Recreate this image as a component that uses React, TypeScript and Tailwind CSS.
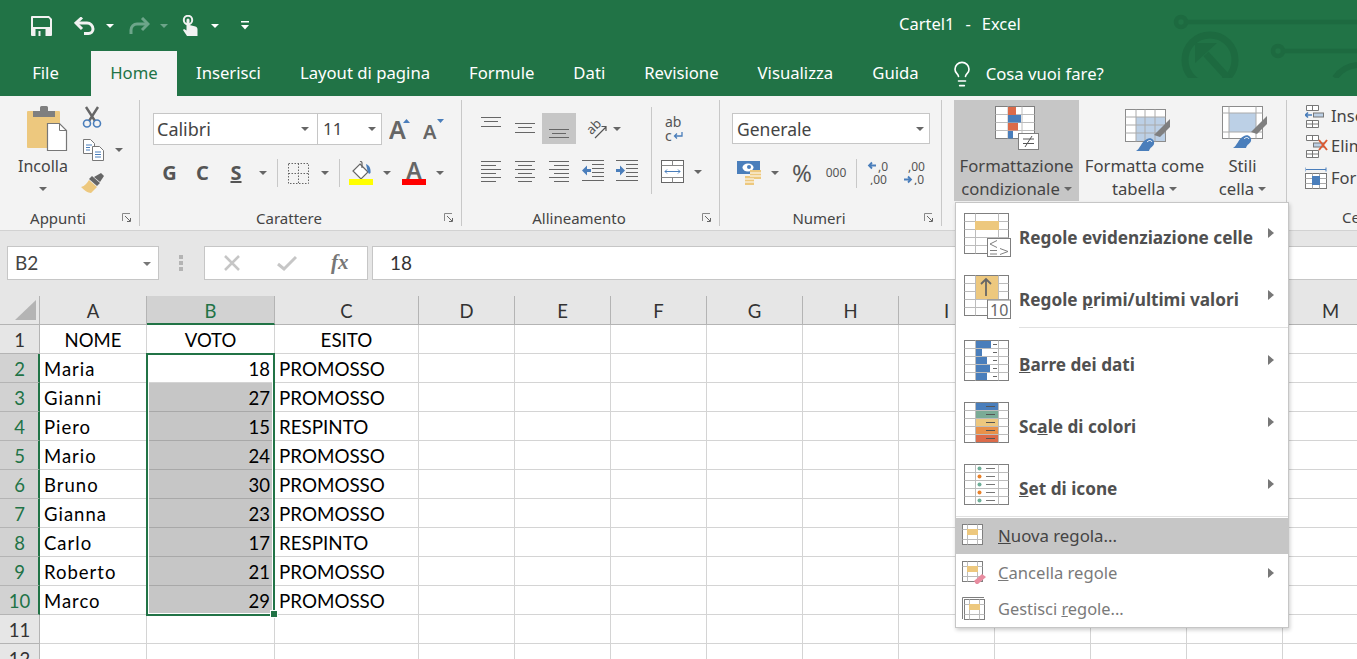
import { Lightbulb } from "lucide-react";
import type { ReactNode } from "react";

const cols = ["D", "E", "F", "G", "H", "I", "J", "K", "L", "M"];

const rows = [
  ["NOME", "VOTO", "ESITO"],
  ["Maria", "18", "PROMOSSO"],
  ["Gianni", "27", "PROMOSSO"],
  ["Piero", "15", "RESPINTO"],
  ["Mario", "24", "PROMOSSO"],
  ["Bruno", "30", "PROMOSSO"],
  ["Gianna", "23", "PROMOSSO"],
  ["Carlo", "17", "RESPINTO"],
  ["Roberto", "21", "PROMOSSO"],
  ["Marco", "29", "PROMOSSO"],
  ["", "", ""],
  ["", "", ""],
];

const uiFont = "font-['Noto_Sans','Open_Sans',sans-serif]";
const cellFont = "font-['Lato','Carlito',sans-serif]";

// small dropdown triangle
const Tri = ({ className = "", fill = "#666" }: { className?: string; fill?: string }) => (
  <svg width="8" height="4" viewBox="0 0 8 4" className={"shrink-0 " + className}>
    <polygon points="0,0 8,0 4,4" fill={fill} />
  </svg>
);

const Sep = ({ className = "" }: { className?: string }) => (
  <div className={"w-px shrink-0 bg-[#c8c8c8] " + className} />
);

const Launcher = () => (
  <svg width="10" height="10" viewBox="0 0 10 10" className="shrink-0">
    <path d="M.5 8V.5H8" fill="none" stroke="#888" />
    <path d="M3 3l5 5M5 8.5h3.5V5" fill="none" stroke="#666" />
  </svg>
);

const Group = ({
  label,
  width,
  children,
}: {
  label: string;
  width: string;
  children: ReactNode;
}) => (
  <div className={"mt-[4px] flex h-[126px] shrink-0 flex-col border-r border-[#c8c8c8] " + width}>
    <div className="h-[106px]">{children}</div>
    <div className="flex h-[20px] items-center pr-[7px] pt-[4px]">
      <span className="mr-[6px] flex-1 text-center text-[15px] leading-[20px] text-[#444]">{label}</span>
      <Launcher />
    </div>
  </div>
);

const SaveIcon = () => (
  <svg width="21" height="20" viewBox="0 0 21 20" className="shrink-0">
    <path d="M1 0h17l3 3v16a1 1 0 0 1-1 1H1a1 1 0 0 1-1-1V1a1 1 0 0 1 1-1z" fill="#f2f2f2" />
    <path d="M2 2h15.500L19 3.500V11H2z" fill="#217346" />
    <rect x="4.500" y="13" width="10" height="7" fill="#217346" />
    <rect x="7.500" y="15" width="2" height="5" fill="#f2f2f2" />
  </svg>
);

const UndoIcon = ({ stroke }: { stroke: string }) => (
  <svg width="22" height="18" viewBox="0 0 22 18" className="shrink-0">
    <path d="M2 6h11a6 6 0 0 1 6 6 4.500 4.500 0 0 1-4.500 4.500H10" fill="none" stroke={stroke} strokeWidth="3" />
    <path d="M8 .5L2 6l6 6" fill="none" stroke={stroke} strokeWidth="3" />
  </svg>
);

const RedoIcon = ({ stroke }: { stroke: string }) => (
  <svg width="21" height="18" viewBox="0 0 21 18" className="shrink-0">
    <path d="M19 7H8a6 6 0 0 0-6 6v4" fill="none" stroke={stroke} strokeWidth="3" />
    <path d="M13 1l6 6-6 6" fill="none" stroke={stroke} strokeWidth="3" />
  </svg>
);

const TouchIcon = () => (
  <svg width="16" height="21" viewBox="0 0 16 21" className="shrink-0">
    <circle cx="6" cy="5" r="4.200" fill="none" stroke="#f2f2f2" strokeWidth="2" />
    <path d="M4.500 5a1.500 1.500 0 0 1 3 0v5l6 1.500c1.500.5 2 1.500 2 3V21H5l-4-6 1-1 2.500 1.500z" fill="#f2f2f2" />
  </svg>
);

const CustomizeIcon = () => (
  <svg width="8" height="9" viewBox="0 0 8 9" className="shrink-0">
    <rect width="8" height="1.500" fill="#fff" />
    <polygon points="0,4 8,4 4,8.500" fill="#fff" />
  </svg>
);

const Circuit = () => (
  <svg
    width="187"
    height="78"
    viewBox="0 0 187 78"
    className="pointer-events-none absolute right-0 top-0"
  >
    <g fill="none" stroke="#1d6a40" strokeWidth="4.500">
      <circle cx="11" cy="22" r="5" />
      <path d="M16 22h171" />
      <circle cx="108" cy="51" r="5" />
      <path d="M113 51h74" />
      <circle cx="40" cy="60" r="25" strokeWidth="7" />
      <path d="M165 78a30 30 0 0 1 22-13" strokeWidth="6" />
      <path d="M36 54L58 78" strokeWidth="7" />
    </g>
    <polygon points="25,43 47,43 25,63" fill="#1d6a40" />
  </svg>
);

const PasteIcon = () => (
  <svg width="41" height="45" viewBox="0 0 41 45" className="ml-[27px] shrink-0">
    <rect x="0" y="5" width="33" height="37" rx="1" fill="#edc87e" />
    <path d="M6 5h7V1.500Q13 0 14.500 0h5Q21 0 21 1.500V5h7v6H6z" fill="#7f7f7f" />
    <path d="M20.500 17.500h12l7 7v20h-19z" fill="#fff" stroke="#777" strokeWidth="1.200" />
    <path d="M32.500 17.500v7h7" fill="none" stroke="#777" />
  </svg>
);

const ScissorsIcon = () => (
  <svg width="20" height="22" viewBox="0 0 20 22" className="ml-[2px] mt-[6px] shrink-0">
    <path d="M4 1l9 14M16 1L7 15" stroke="#666" strokeWidth="2.400" fill="none" />
    <circle cx="5" cy="17.500" r="3.500" fill="none" stroke="#4a7ebb" strokeWidth="1.600" />
    <circle cx="15" cy="17.500" r="3.500" fill="none" stroke="#4a7ebb" strokeWidth="1.600" />
  </svg>
);

const CopyIcon = () => (
  <svg width="21" height="22" viewBox="0 0 21 22" className="shrink-0">
    <path d="M.500.500h7l4 4v10h-11z" fill="#fff" stroke="#777" />
    <path d="M9.500 7.500h7l4 4v10h-11z" fill="#fff" stroke="#777" />
    <path d="M3 6h6M3 8.500h4M3 11h4M12 13h6M12 15.500h6M12 18h6" stroke="#4a7ebb" />
  </svg>
);

const BrushIcon = () => (
  <svg width="24" height="21" viewBox="0 0 24 21" className="ml-[1px] mt-[12px] shrink-0">
    <path d="M0 14c4-1 6-4 8-7l8 7-6 6c-3 0-7-3-10-6z" fill="#edc87e" />
    <path d="M8 6l3-3 8 7-3 3z" fill="#666" />
    <path d="M13 4l7-4 3 3-4 6z" fill="#666" />
  </svg>
);

const GrowIcon = ({ up }: { up: boolean }) => (
  <svg width="21" height="21" viewBox="0 0 21 21" className="shrink-0">
    <text
      x="0"
      y="20"
      fontSize={up ? "25" : "20"}
      fontWeight="600"
      fontFamily="Noto Sans, sans-serif"
      fill="#666"
    >
      A
    </text>
    {up ? (
      <polygon points="14,4 21,4 17.500,0" fill="#4a7ebb" />
    ) : (
      <polygon points="14,0 21,0 17.500,4" fill="#4a7ebb" />
    )}
  </svg>
);

const BordersIcon = () => (
  <svg width="21" height="21" viewBox="0 0 21 21" className="ml-[10px] shrink-0">
    <path
      d="M.5.500h20v20H.5zM10.500.500v20M.5 10.500h20"
      fill="none"
      stroke="#666"
      strokeDasharray="1.500 1.500"
    />
  </svg>
);

const FillIcon = () => (
  <svg width="24" height="24" viewBox="0 0 24 24" className="ml-[9px] shrink-0">
    <path d="M11 3l8 8-7 7-8-8z" fill="#fff" stroke="#666" strokeWidth="1.200" />
    <path d="M11 0.500a1.500 1.500 0 0 1 2 1.500v5" fill="none" stroke="#666" strokeWidth="1.200" />
    <path d="M17 3c3 1 5 4 4.500 9l-1.500 1-1.500-3z" fill="#4a7ebb" />
    <rect x="0" y="18" width="24" height="6" fill="#ffff00" />
  </svg>
);

const FontColorIcon = () => (
  <div className="ml-[11px] flex h-[24px] w-[24px] shrink-0 flex-col items-center">
    <span className="h-[18px] text-[23px] font-semibold leading-[19px] text-[#666]">A</span>
    <div className="h-[6px] w-[24px] bg-[#ff0000]" />
  </div>
);

// grey bars used by the three vertical alignment buttons
const VLines = ({ lines, className = "" }: { lines: [number, number, number][]; className?: string }) => (
  <svg width="22" height="31" viewBox="0 0 22 31" className={"shrink-0 " + className}>
    {lines.map(([y, x, w], i) => (
      <rect key={i} x={x} y={y} width={w} height="1" fill="#666" />
    ))}
  </svg>
);

// six bars used by the horizontal alignment buttons
const HLines = ({ lines, className = "" }: { lines: [number, number, number][]; className?: string }) => (
  <svg width="22" height="22" viewBox="0 0 22 22" className={"shrink-0 " + className}>
    {lines.map(([y, x, w], i) => (
      <rect key={i} x={x} y={y} width={w} height="1" fill="#666" />
    ))}
  </svg>
);

const IndentIcon = ({ flip }: { flip: boolean }) => (
  <svg width="22" height="22" viewBox="0 0 22 22" className="ml-[12px] shrink-0">
    <path d="M0 .5h22M0 20.500h22M10 4.500h12M10 8.500h12M10 12.500h12M10 16.500h12" stroke="#666" />
    {flip ? (
      <path d="M0 9h4V5.500l5 5-5 5V12H0z" fill="#4a7ebb" />
    ) : (
      <path d="M9 9H5V5.500l-5 5 5 5V12h4z" fill="#4a7ebb" />
    )}
  </svg>
);

const OrientIcon = () => (
  <svg width="21" height="20" viewBox="0 0 21 20" className="shrink-0">
    <text
      x="8"
      y="12"
      fontSize="13"
      textAnchor="middle"
      fontFamily="Noto Sans, sans-serif"
      fill="#555"
      transform="rotate(-45 8 8)"
    >
      ab
    </text>
    <path d="M9 19L20 8M15.500 7.500H20V12" fill="none" stroke="#555" strokeWidth="1.200" />
  </svg>
);

const MergeIcon = () => (
  <svg width="23" height="23" viewBox="0 0 23 23" className="shrink-0">
    <rect x=".5" y=".5" width="22" height="22" fill="#fff" stroke="#666" />
    <path d="M.5 5.500h22M.5 17.500h22M11.500.500v5M11.500 17.500v5" stroke="#888" fill="none" />
    <path d="M4 11.500h15M6 9.500l-2 2 2 2M17 9.500l2 2-2 2" stroke="#4a7ebb" fill="none" />
  </svg>
);

const CurrencyIcon = () => (
  <svg width="24" height="24" viewBox="0 0 24 24" className="ml-[17px] shrink-0">
    <rect x="0" y="0" width="23" height="13" fill="#4a7ebb" />
    <ellipse cx="11" cy="6.500" rx="5.500" ry="4" fill="#fff" />
    <circle cx="12" cy="6" r="2" fill="#4a7ebb" />
    <rect x="13" y="9" width="11" height="9" fill="#edc87e" />
    <rect x="8" y="15" width="9" height="9" fill="#edc87e" />
    <path d="M13 12h11M13 15h11M8 18h9M8 21h9" stroke="#fff" />
  </svg>
);

const DecimalIcon = ({ top, bottom, arrowTop }: { top: string; bottom: string; arrowTop: boolean }) => (
  <svg width="23" height="24" viewBox="0 0 23 24" className="shrink-0">
    <text x={arrowTop ? "11" : "5"} y="10" fontSize="12" fontFamily="Noto Sans, sans-serif" fill="#555">
      {top}
    </text>
    <text x={arrowTop ? "3" : "11"} y="23" fontSize="12" fontFamily="Noto Sans, sans-serif" fill="#555">
      {bottom}
    </text>
    {arrowTop ? (
      <path d="M9 4.500H2M5 1.500l-3 3 3 3" fill="none" stroke="#4a7ebb" strokeWidth="1.800" />
    ) : (
      <path d="M1 18.500h7M5 15.500l3 3-3 3" fill="none" stroke="#4a7ebb" strokeWidth="1.800" />
    )}
  </svg>
);

const CondFormatIcon = () => (
  <svg width="44" height="44" viewBox="0 0 44 44" className="shrink-0">
    <rect x=".5" y=".5" width="39" height="32" fill="#fff" stroke="#7f7f7f" />
    <path d="M.5 8.500h39M.5 16.500h39M.5 24.500h39M13 .500v32M27 .500v32" stroke="#bcbcbc" />
    <rect x="13" y="1" width="8" height="8" fill="#dc6b4a" />
    <rect x="13" y="9" width="13" height="7.500" fill="#4a7ebb" />
    <rect x="13" y="17" width="10" height="7.500" fill="#dc6b4a" />
    <rect x="13" y="25" width="5" height="7.500" fill="#4a7ebb" />
    <rect x="23.500" y="27.500" width="20" height="16" fill="#fff" stroke="#7f7f7f" />
    <path d="M28 33h11M28 37.500h11M30 41l7-11" stroke="#555" />
  </svg>
);

const TableBrushIcon = ({ plain }: { plain: boolean }) => (
  <svg width="45" height="42" viewBox="0 0 45 42" className="shrink-0">
    <rect x=".5" y=".5" width="40" height="32" fill="#fff" stroke="#8c8c8c" />
    <rect x={plain ? 7 : 11} y={plain ? 7 : 8} width={plain ? 27 : 29} height={plain ? 19 : 24} fill="#bcd0e6" />
    {plain ? (
      <path d="M.5 7h40M.5 26h40M7 .500v32M34 .500v32" stroke="#aaa" fill="none" />
    ) : (
      <path d="M.5 8h40M.5 16h40M.5 24h40M11 .500v32M20 .500v32M30 .500v32" stroke="#aaa" fill="none" />
    )}
    <path d="M29 26l16-16v8L35 28z" fill="#7f7f7f" />
    <path d="M11 42c4-2 5-9 11-12 4-2 8 1 7 5-1 3-4 3-5 7z" fill="#4a7ebb" />
    <path d="M22 33c2-2 4-2 5 0" stroke="#fff" fill="none" />
  </svg>
);

const CellsIcon = ({ kind }: { kind: "ins" | "del" | "fmt" }) => (
  <svg width="23" height="23" viewBox="0 0 23 23" className="ml-[18px] shrink-0">
    {kind === "fmt" ? (
      <>
        <path d="M0 .5v4M21 .5v4M1 2.500h20" stroke="#4a7ebb" fill="none" />
        <rect x=".5" y="6.500" width="21" height="15" fill="#fff" stroke="#777" />
        <path d="M7.500 6.500v15M14.500 6.500v15M.5 11.500h21M.5 16.500h21" stroke="#aaa" />
        <rect x="7" y="9" width="8" height="9" fill="#4a7ebb" />
      </>
    ) : (
      <>
        <path d="M1.500.5h12v5h-12zM7.500.5v5M1.500 15.500h12v7h-12zM7.500 15.500v7M1.500 19h12" fill="#fff" stroke="#777" />
        <rect x="8.500" y="8" width="10" height="4" fill="#bcd0e6" stroke="#777" />
        {kind === "ins" ? (
          <path d="M7 10H0M3 7.500L.5 10 3 12.500" fill="none" stroke="#4a7ebb" strokeWidth="1.600" />
        ) : (
          <path d="M14 5l8 10M22 5l-8 10" stroke="#dc5a33" strokeWidth="2" />
        )}
      </>
    )}
  </svg>
);

const GridBase = ({ children }: { children: ReactNode }) => (
  <svg width="47" height="44" viewBox="0 0 47 44" className="shrink-0">
    <rect x=".5" y=".5" width="44" height="40" fill="#fff" stroke="#7f7f7f" />
    <path d="M.5 8.500h44M.5 16.500h44M.5 24.500h44M.5 32.500h44M11.500.500v40M34.500.500v40" stroke="#bcbcbc" />
    {children}
  </svg>
);

const menuBars = [15, 6, 11, 14, 11];
const scaleColors = ["#4a7ebb", "#7aab96", "#edc87e", "#e8914a", "#dc6b4a"];

const MenuIconHighlight = () => (
  <GridBase>
    <rect x="11" y="8" width="24" height="9" fill="#edc87e" />
    <rect x="23.500" y="25.500" width="23" height="18" fill="#fff" stroke="#7f7f7f" />
    <path d="M33 27.500l-7 3.500 7 3.500M26 37.500h7M26 41h7M36 35.500l8 3-8 3" fill="none" stroke="#7f7f7f" />
  </GridBase>
);

const MenuIconTop = () => (
  <GridBase>
    <rect x="12" y="1" width="22" height="23" fill="#edc87e" />
    <path d="M22 21V4M17 9l5-5 5 5" fill="none" stroke="#666" strokeWidth="1.800" />
    <rect x="23.500" y="25" width="23" height="18.500" fill="#fff" stroke="#7f7f7f" />
    <text x="26" y="41" fontSize="16" fontFamily="Noto Sans, sans-serif" fill="#666">
      10
    </text>
  </GridBase>
);

const MenuIconBars = () => (
  <GridBase>
    <rect x="12" y="1" width="22" height="39" fill="#fff" />
    <path d="M12 8.500h22M12 16.500h22M12 24.500h22M12 32.500h22" stroke="#bcbcbc" />
    {menuBars.map((w, i) => (
      <rect key={i} x="12" y={1 + i * 8} width={w} height="7" fill="#4a7ebb" />
    ))}
    {menuBars.map((_, i) => (
      <rect key={i} x="29" y={4 + i * 8} width="4" height="1" fill="#666" />
    ))}
  </GridBase>
);

const MenuIconScale = () => (
  <GridBase>
    {scaleColors.map((c, i) => (
      <rect key={i} x="12" y={1 + i * 8} width="22" height="7" fill={c} />
    ))}
    {scaleColors.map((_, i) => (
      <rect key={i} x="22" y={4 + i * 8} width="9" height="1" fill="#555" />
    ))}
  </GridBase>
);

const MenuIconSet = () => (
  <GridBase>
    {scaleColors.map((_, i) => (
      <g key={i}>
        <circle cx="15.500" cy={4.500 + i * 8} r="2" fill={i % 2 ? "#e8812a" : "#6fae98"} />
        <rect x="22" y={4 + i * 8} width="9" height="1" fill="#777" />
      </g>
    ))}
  </GridBase>
);

const SmallRule = ({ kind }: { kind: "new" | "del" | "manage" }) => (
  <svg width="24" height="24" viewBox="0 0 24 24" className="shrink-0">
    {kind === "manage" && <path d="M.5 22V.5H22" fill="none" stroke="#7f7f7f" />}
    <rect
      x={kind === "manage" ? 2.5 : 0.5}
      y={kind === "manage" ? 2.5 : 0.5}
      width="20"
      height="20"
      fill="#fff"
      stroke="#7f7f7f"
    />
    <path
      d={
        kind === "manage"
          ? "M2.500 7.500h20M2.500 17.500h20M7.500 2.500v20M17.500 2.500v20"
          : "M.5 5.500h20M.5 15.500h20M5.500.5v20M15.500.5v20"
      }
      stroke="#bcbcbc"
    />
    <rect x={kind === "manage" ? 7 : 5} y={kind === "manage" ? 7 : 5} width="11" height="6" fill="#edc87e" />
    {kind === "del" && <path d="M12 20l8-7 4 3-8 7h-2z" fill="#e88ca0" />}
  </svg>
);

const SubArrow = ({ className = "" }: { className?: string }) => (
  <svg width="6" height="10" viewBox="0 0 6 10" className={"ml-auto mr-[14px] shrink-0 " + className}>
    <polygon points="0,0 6,5 0,10" fill="#777" />
  </svg>
);

const BigItem = ({
  icon,
  pad,
  children,
}: {
  icon: ReactNode;
  pad: string;
  children: ReactNode;
}) => (
  <div className={"flex h-[62px] items-start pl-[8px] " + pad}>
    {icon}
    <span className="ml-[8px] mt-[13px] whitespace-nowrap text-[17.200px] font-bold leading-[24px] text-[#505050]">
      {children}
    </span>
    <SubArrow className="mt-[15px]" />
  </div>
);

const Menu = () => (
  <div
    className={
      "absolute left-[955px] top-[202px] h-[426px] w-[334px] border border-[#c6c6c6] bg-white pt-[4px] shadow-[1px_2px_4px_rgba(0,0,0,0.2)] " +
      uiFont
    }
  >
    <BigItem icon={<MenuIconHighlight />} pad="pt-[6px]">
      Re<u>g</u>ole evidenziazione celle
    </BigItem>
    <BigItem icon={<MenuIconTop />} pad="pt-[6px] !h-[58px]">
      Regole <u>p</u>rimi/ultimi valori
    </BigItem>
    <div className="ml-[63px] h-px bg-[#e1e1e1]" />
    <BigItem icon={<MenuIconBars />} pad="pt-[12px]">
      <u>B</u>arre dei dati
    </BigItem>
    <BigItem icon={<MenuIconScale />} pad="pt-[12px]">
      Sc<u>a</u>le di colori
    </BigItem>
    <BigItem icon={<MenuIconSet />} pad="pt-[12px] !h-[64px]">
      <u>S</u>et di icone
    </BigItem>
    <div className="h-px bg-[#e1e1e1]" />
    <div className="mt-px flex h-[36px] items-center bg-[#c6c6c6] pl-[6px] text-[16.800px] text-[#444]">
      <SmallRule kind="new" />
      <span className="ml-[12px]">
        <u>N</u>uova regola...
      </span>
    </div>
    <div className="flex h-[37px] items-center pl-[6px] pt-[1px] text-[16.600px] text-[#7a7a7a]">
      <SmallRule kind="del" />
      <span className="ml-[12px]">
        <u>C</u>ancella regole
      </span>
      <SubArrow />
    </div>
    <div className="flex h-[36px] items-center pl-[6px] text-[16.400px] text-[#7a7a7a]">
      <SmallRule kind="manage" />
      <span className="ml-[12px]">
        Gestisci <u>r</u>egole...
      </span>
    </div>
  </div>
);

const tabs = ["Inserisci", "Layout di pagina", "Formule", "Dati", "Revisione", "Visualizza", "Guida"];

const Ribbon = () => (
  <div className={"flex h-[135px] overflow-hidden border-b border-[#d2d2d2] bg-[#f3f3f3] " + uiFont}>
    <Group label="Appunti" width="w-[140px]">
      <div className="flex">
        <div className="flex w-[80px] shrink-0 flex-col pt-[6px]">
          <PasteIcon />
          <div className="mt-[3px] w-[86px] text-center text-[16px] leading-[24px] text-[#444]">Incolla</div>
          <div className="mt-[9px] flex w-[86px] justify-center">
            <Tri />
          </div>
        </div>
        <div className="flex flex-col">
          <ScissorsIcon />
          <div className="ml-[3px] mt-[11px] flex items-center">
            <CopyIcon />
            <Tri className="ml-[11px]" />
          </div>
          <BrushIcon />
        </div>
      </div>
    </Group>

    <Group label="Carattere" width="w-[322px]">
      <div className="flex items-center pl-[13px] pt-[13px]">
        <div className="flex h-[32px] w-[165px] items-center justify-between border border-[#c6c6c6] bg-white pl-[3px] pr-[8px] text-[18px] text-[#444]">
          Calibri
          <Tri />
        </div>
        <div className="flex h-[32px] w-[64px] items-center justify-between border border-l-0 border-[#c6c6c6] bg-white pl-[5px] pr-[5px] text-[17px] text-[#444]">
          11
          <Tri />
        </div>
        <div className="ml-[7px]">
          <GrowIcon up />
        </div>
        <div className="ml-[13px]">
          <GrowIcon up={false} />
        </div>
      </div>
      <div className="mt-[16px] flex h-[24px] items-center pl-[13px] text-[#555]">
        <span className="w-[33px] text-center text-[20px] font-bold leading-[24px]">G</span>
        <span className="w-[33px] text-center text-[20px] font-bold leading-[24px]">C</span>
        <span className="w-[34px] text-center text-[20px] font-bold leading-[24px] underline">S</span>
        <Tri className="ml-[6px]" />
        <Sep className="ml-[10px] h-[28px]" />
        <BordersIcon />
        <Tri className="ml-[12px]" />
        <Sep className="ml-[10px] h-[28px]" />
        <FillIcon />
        <Tri className="ml-[10px]" />
        <FontColorIcon />
        <Tri className="ml-[10px]" />
      </div>
    </Group>

    <Group label="Allineamento" width="w-[258px]">
      <div className="flex">
        <div className="w-[189px] shrink-0 pt-[13px]">
          <div className="flex h-[31px] items-center pl-[18px]">
            <VLines lines={[[4, 1, 20], [8, 4, 14], [13, 1, 20]]} />
            <VLines className="ml-[12px]" lines={[[10, 1, 20], [14, 4, 14], [19, 1, 20]]} />
            <div className="ml-[6px] flex h-[31px] w-[34px] justify-center bg-[#c6c6c6]">
              <VLines lines={[[16, 1, 20], [20, 4, 14], [24, 1, 20]]} />
            </div>
            <div className="ml-[10px]">
              <OrientIcon />
            </div>
            <Tri className="ml-[6px]" />
          </div>
          <div className="mt-[16px] flex h-[22px] items-center pl-[18px]">
            <HLines lines={[[1, 1, 20], [5, 1, 15], [9, 1, 20], [13, 1, 15], [17, 1, 20], [21, 1, 15]]} />
            <HLines className="ml-[12px]" lines={[[1, 1, 20], [5, 4, 14], [9, 1, 20], [13, 4, 14], [17, 1, 20], [21, 4, 14]]} />
            <HLines className="ml-[12px]" lines={[[1, 1, 20], [5, 6, 15], [9, 1, 20], [13, 6, 15], [17, 1, 20], [21, 6, 15]]} />
            <IndentIcon flip={false} />
            <IndentIcon flip />
          </div>
        </div>
        <Sep className="mt-[7px] h-[87px]" />
        <div className="flex flex-col pl-[9px]">
          <div className="ml-[4px] mt-[15px] flex h-[32px] w-[20px] flex-col text-[14px] leading-[14px] text-[#555]">
            <span>ab</span>
            <span className="flex items-center">
              c
              <svg width="10" height="8" viewBox="0 0 10 8" className="ml-[1px]">
                <path d="M9 0v4H2M4 1.500L1.500 4 4 6.500" fill="none" stroke="#4a7ebb" strokeWidth="1.300" />
              </svg>
            </span>
          </div>
          <div className="mt-[13px] flex items-center">
            <MergeIcon />
            <Tri className="ml-[10px]" />
          </div>
        </div>
      </div>
    </Group>

    <Group label="Numeri" width="w-[222px]">
      <div className="pl-[12px] pt-[13px]">
        <div className="flex h-[31px] w-[198px] items-center justify-between border border-[#c6c6c6] bg-white pl-[4px] pr-[5px] pt-[1px] text-[17.500px] text-[#444]">
          Generale
          <Tri />
        </div>
      </div>
      <div className="mt-[17px] flex h-[24px] items-center text-[#555]">
        <CurrencyIcon />
        <Tri className="ml-[10px]" />
        <span className="ml-[12px] w-[22px] text-center text-[24px] leading-[24px]">%</span>
        <span className="ml-[12px] w-[22px] text-center text-[12px] leading-[24px]">000</span>
        <Sep className="ml-[9px] mr-[10px] h-[29px]" />
        <DecimalIcon top=",0" bottom=",00" arrowTop />
        <div className="ml-[13px]">
          <DecimalIcon top=",00" bottom=",0" arrowTop={false} />
        </div>
      </div>
    </Group>

    <div className="mt-[4px] flex h-[126px] w-[345px] shrink-0 border-r border-[#c8c8c8] pl-[12px] text-[16.700px] leading-[23px] text-[#444]">
      <div className="flex h-[101px] w-[125px] shrink-0 flex-col items-center bg-[#c6c6c6] pt-[6px]">
        <CondFormatIcon />
        <span className="mt-[4px]">Formattazione</span>
        <span className="flex items-center">
          condizionale
          <Tri className="ml-[4px]" />
        </span>
      </div>
      <div className="ml-[5px] flex h-[101px] w-[121px] shrink-0 flex-col items-center pt-[9px]">
        <div className="ml-[6px]">
          <TableBrushIcon plain={false} />
        </div>
        <span className="mt-[3px]">Formatta come</span>
        <span className="flex items-center">
          tabella
          <Tri className="ml-[4px]" />
        </span>
      </div>
      <div className="flex h-[101px] w-[75px] shrink-0 flex-col items-center pt-[6px]">
        <div className="ml-[4px]">
          <TableBrushIcon plain />
        </div>
        <span className="mt-[6px]">Stili</span>
        <span className="flex items-center">
          cella
          <Tri className="ml-[4px]" />
        </span>
      </div>
    </div>

    <div className="mt-[4px] flex h-[126px] w-[70px] shrink-0 flex-col whitespace-nowrap text-[16.500px] text-[#444]">
      <div className="mt-[4px] flex h-[24px] items-center">
        <CellsIcon kind="ins" />
        <span className="ml-[3px]">Inserisci</span>
      </div>
      <div className="mt-[6px] flex h-[24px] items-center">
        <CellsIcon kind="del" />
        <span className="ml-[3px]">Elimina</span>
      </div>
      <div className="mt-[8px] flex h-[24px] items-center">
        <CellsIcon kind="fmt" />
        <span className="ml-[3px]">Formato</span>
      </div>
      <span className="ml-[55px] mt-[16px] text-[15px]">Celle</span>
    </div>
  </div>
);

const FormulaBar = () => (
  <div className={"flex h-[65px] items-start bg-[#e6e6e6] pt-[15px] " + cellFont}>
    <div className="ml-[7px] flex h-[34px] w-[152px] items-center justify-between border border-[#c6c6c6] bg-white pl-[7px] pr-[7px] pt-[1px] text-[19px] text-[#444]">
      B2
      <Tri fill="#777" />
    </div>
    <div className="ml-[20px] mt-[9px] flex w-[4px] flex-col gap-[2px]">
      <div className="h-[4px] bg-[#b4b4b4]" />
      <div className="h-[4px] bg-[#b4b4b4]" />
      <div className="h-[4px] bg-[#b4b4b4]" />
    </div>
    <div className="ml-[21px] flex h-[34px] w-[164px] items-center border border-[#c6c6c6] bg-white">
      <svg width="18" height="16" viewBox="0 0 18 16" className="ml-[18px] shrink-0">
        <path d="M2 1l14 14M16 1L2 15" stroke="#c6c6c6" strokeWidth="2.500" />
      </svg>
      <svg width="20" height="16" viewBox="0 0 20 16" className="ml-[36px] shrink-0">
        <path d="M1 9l6 5L19 2" fill="none" stroke="#c6c6c6" strokeWidth="3" />
      </svg>
      <span className="ml-[34px] font-['Liberation_Serif',serif] text-[21px] font-bold italic text-[#777]">
        fx
      </span>
    </div>
    <div className="ml-[4px] flex h-[34px] flex-1 items-center border border-r-0 border-[#c6c6c6] bg-white pl-[17px] pt-[1px] text-[19px] text-[#333]">
      18
    </div>
  </div>
);

const Sheet = () => (
  <div className={"relative text-[18.500px] text-black " + cellFont}>
    <div className="grid grid-cols-[40px_107px_128px_144px_repeat(10,96px)] auto-rows-[29px]">
      <div className="flex items-end justify-end border-b border-r border-[#b4b4b4] bg-[#e6e6e6] pb-[4px] pr-[3px]">
        <svg width="21" height="20" viewBox="0 0 21 20">
          <polygon points="21,0 21,20 0,20" fill="#b4b4b4" />
        </svg>
      </div>
      <div className="border-b border-r border-[#b4b4b4] bg-[#e6e6e6] text-center leading-[31px] text-[#333]">A</div>
      <div className="border-b-2 border-r border-b-[#217346] border-r-[#b4b4b4] bg-[#d2d2d2] text-center leading-[31px] text-[#217346]">
        B
      </div>
      <div className="border-b border-r border-[#b4b4b4] bg-[#e6e6e6] text-center leading-[31px] text-[#333]">C</div>
      {cols.map((c) => (
        <div key={c} className="border-b border-r border-[#b4b4b4] bg-[#e6e6e6] text-center leading-[31px] text-[#333]">
          {c}
        </div>
      ))}
      {rows.map((r, i) => {
        const selected = i >= 1 && i <= 9;
        return [
          <div
            key={"h" + i}
            className={
              selected
                ? "border-b border-r-2 border-b-[#b4b4b4] border-r-[#217346] bg-[#d2d2d2] pl-px text-center leading-[30px] text-[#217346]"
                : "border-b border-r border-[#b4b4b4] bg-[#e6e6e6] text-center leading-[30px] text-[#333]"
            }
          >
            {i + 1}
          </div>,
          <div
            key={"a" + i}
            className={
              "overflow-hidden border-b border-r border-[#d4d4d4] leading-[30px] " +
              (i === 0 ? "text-center" : "pl-[4px] tracking-[1px]")
            }
          >
            {r[0]}
          </div>,
          <div
            key={"b" + i}
            className={
              "border-b border-r leading-[30px] " +
              (i === 0 ? "border-[#d4d4d4] text-center" : "pr-[4px] text-right ") +
              (i === 1 ? " border-[#d4d4d4]" : "") +
              (i >= 2 && i <= 9 ? " border-[#a8a8a8] bg-[#c6c6c6]" : "") +
              (i > 9 ? " border-[#d4d4d4]" : "")
            }
          >
            {r[1]}
          </div>,
          <div
            key={"c" + i}
            className={
              "whitespace-nowrap border-b border-r border-[#d4d4d4] text-[18.800px] leading-[30px] " +
              (i === 0 ? "text-center" : "pl-[4px]")
            }
          >
            {r[2]}
          </div>,
          ...cols.map((c) => <div key={c + i} className="border-b border-r border-[#d4d4d4]" />),
        ];
      })}
    </div>
    {/* selection frame and fill handle */}
    <div className="pointer-events-none absolute left-[146px] top-[57px] h-[263px] w-[129px] border-2 border-[#217346] shadow-[inset_0_0_0_1px_white]" />
    <div className="absolute left-[270px] top-[314px] h-[8px] w-[8px] border border-white bg-[#217346]" />
  </div>
);

export default function App() {
  return (
    <div className="relative h-[659px] w-[1357px] overflow-hidden bg-white">
      <div className={"relative h-[96px] bg-[#217346] text-white " + uiFont}>
        <Circuit />
        <div className="flex h-[51px] items-center">
          <div className="ml-[31px] flex items-center">
            <SaveIcon />
            <div className="ml-[22px]">
              <UndoIcon stroke="#f2f2f2" />
            </div>
            <Tri className="ml-[10px]" fill="#fff" />
            <div className="ml-[15px]">
              <RedoIcon stroke="#6da58a" />
            </div>
            <Tri className="ml-[10px]" fill="#6da58a" />
            <div className="ml-[14px]">
              <TouchIcon />
            </div>
            <Tri className="ml-[13px]" fill="#fff" />
            <div className="ml-[22px]">
              <CustomizeIcon />
            </div>
          </div>
          <div className="absolute left-[899px] top-[12px] flex whitespace-nowrap text-[16.500px] leading-[24px]">
            <span>Cartel1</span>
            <span className="ml-[11px]">-</span>
            <span className="ml-[11px]">Excel</span>
          </div>
        </div>
        <div className="flex h-[45px] items-stretch text-[16.700px]">
          <div className="flex w-[91px] items-center justify-center pb-[1px]">File</div>
          <div className="flex w-[86px] items-center justify-center bg-[#f3f3f3] pb-[1px] text-[#217346]">Home</div>
          <div className="ml-[19px] flex items-center gap-[39px] pb-[1px]">
            {tabs.map((t) => (
              <span key={t}>{t}</span>
            ))}
          </div>
          <div className="ml-[29px] flex items-center">
            <Lightbulb size={28} strokeWidth={1.4} className="shrink-0" />
            <span className="ml-[10px] whitespace-nowrap">Cosa vuoi fare?</span>
          </div>
        </div>
      </div>
      <Ribbon />
      <FormulaBar />
      <Sheet />
      <Menu />
    </div>
  );
}
